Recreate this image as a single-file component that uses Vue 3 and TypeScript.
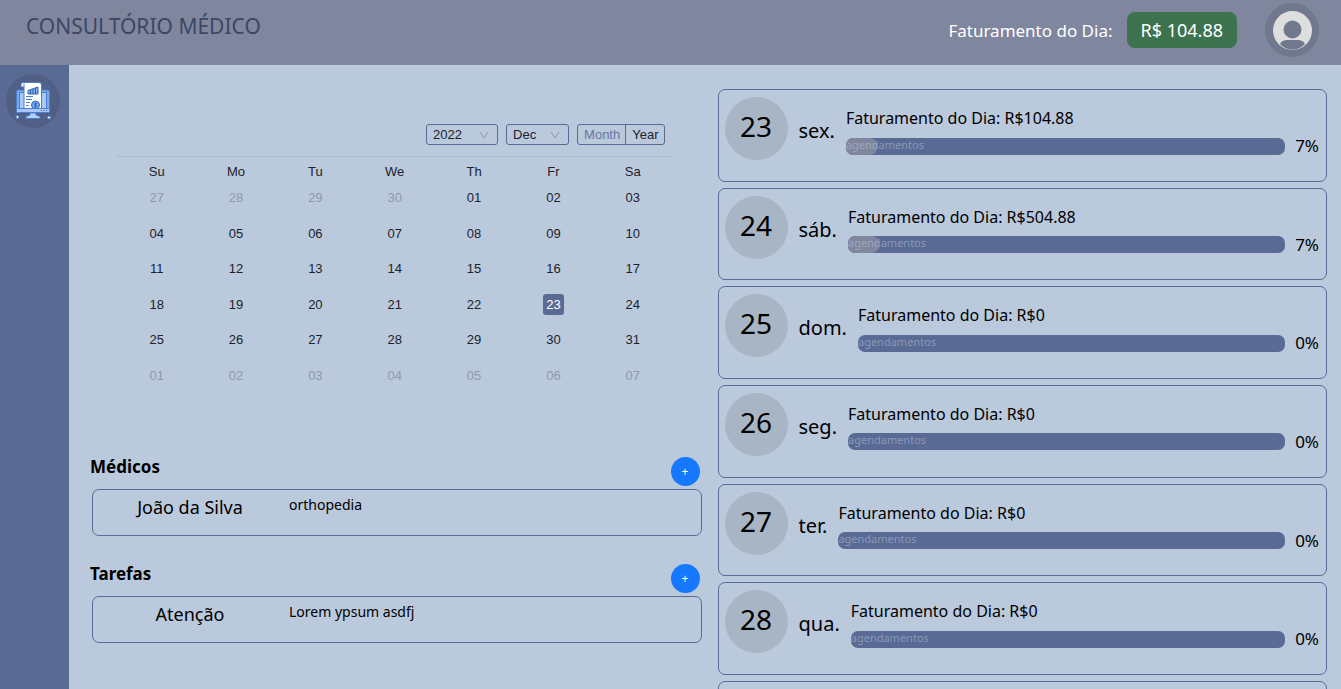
<script setup lang="ts">
import { computed, ref } from 'vue'

interface DaySummary {
  day: number
  weekday: string
  revenue: string
  percent: number
}

interface CalendarDay {
  label: string
  inMonth: boolean
}

interface ListItem {
  title: string
  detail: string
}

const year = ref('2022')
const month = ref('Dec')
const mode = ref('month')
const selectedDay = ref('23')

const weekdays: string[] = ['Su', 'Mo', 'Tu', 'We', 'Th', 'Fr', 'Sa']

const pad = (n: number): string => String(n).padStart(2, '0')

const weeks = computed<CalendarDay[][]>(() => {
  const start = new Date(2022, 10, 27)
  return Array.from({ length: 6 }, (_, w) =>
    Array.from({ length: 7 }, (_, d) => {
      const date = new Date(start.getFullYear(), start.getMonth(), start.getDate() + w * 7 + d)
      return { label: pad(date.getDate()), inMonth: date.getMonth() === 11 }
    }),
  )
})

const days: DaySummary[] = [
  { day: 23, weekday: 'sex.', revenue: '104.88', percent: 7 },
  { day: 24, weekday: 'sáb.', revenue: '504.88', percent: 7 },
  { day: 25, weekday: 'dom.', revenue: '0', percent: 0 },
  { day: 26, weekday: 'seg.', revenue: '0', percent: 0 },
  { day: 27, weekday: 'ter.', revenue: '0', percent: 0 },
  { day: 28, weekday: 'qua.', revenue: '0', percent: 0 },
  { day: 29, weekday: 'qui.', revenue: '0', percent: 0 },
]

const sections: { name: string; items: ListItem[] }[] = [
  { name: 'Médicos', items: [{ title: 'João da Silva', detail: 'orthopedia' }] },
  { name: 'Tarefas', items: [{ title: 'Atenção', detail: 'Lorem ypsum asdfj' }] },
]
</script>

<template>
  <div class="page">
    <header class="topbar">
      <h1 class="brand">CONSULTÓRIO MÉDICO</h1>
      <div class="account">
        <span class="account-label">Faturamento do Dia:</span>
        <span class="badge">R$ 104.88</span>
        <button class="round-button avatar" type="button" aria-label="Perfil">
          <svg viewBox="0 0 39 39" width="39" height="39" aria-hidden="true">
            <circle cx="19.5" cy="19.5" r="19.5" fill="#dedede" />
            <circle cx="19.5" cy="18.5" r="9" fill="#6f788c" />
            <path d="M7 33C8.500 30 11 29 14 29H25C28 29 30.500 30 32 33C25 40.500 14 40.500 7 33Z" fill="#6f788c" />
          </svg>
        </button>
      </div>
    </header>

    <div class="body">
      <nav class="sidebar">
        <button class="round-button report" type="button" aria-label="Relatórios">
          <svg viewBox="0 0 36 38" width="36" height="38" aria-hidden="true">
            <rect x="1" y="7.500" width="34" height="23.500" rx="2" fill="#4a80d4" />
            <rect x="2" y="8.500" width="32" height="21" rx="1" fill="#79a9ee" />
            <rect x="4" y="10" width="28" height="17" fill="#4a80d4" />
            <rect x="5" y="11" width="26" height="15" fill="#a9c8fa" />
            <path d="M8 .5H24Q26.500 .5 26.500 3V26.500H9V5H6V2.500Q6 .5 8 .5Z" fill="#fff" stroke="#4a80d4" />
            <path d="M9 1.500V5" stroke="#4a80d4" />
            <path d="M13 12V8.500L23 5V12Z" fill="#79a9ee" stroke="#3467b4" />
            <path d="M15.500 8V12M18 7V12M20.500 6V12" stroke="#3467b4" />
            <path d="M11 14.500H18M11 17.500H17M11 20.500H15M11 23.500H14" stroke="#4a80d4" />
            <circle cx="20.500" cy="23" r="4" fill="#79a9ee" stroke="#3467b4" />
            <path d="M22 21.500H20.500C19 21.500 19 23 20.500 23S22 25 20.500 25H19M20.500 20.500V26" fill="none" stroke="#3467b4" />
            <rect x="1.500" y="26.500" width="33" height="4" rx="1" fill="#a9c8fa" stroke="#4a80d4" />
            <path d="M26 28.500H27M28.500 28.500H29.500M31 28.500H32" stroke="#3467b4" />
            <path d="M15 31H21V33L25 34.500V36.500H11V34.500L15 33Z" fill="#b5d0fc" stroke="#4a80d4" />
            <circle cx="2.500" cy="35" r="1.500" fill="#fff" stroke="#4a80d4" />
            <circle cx="34" cy="35.500" r="1.500" fill="#fff" stroke="#4a80d4" />
            <path d="M29 4.500H30M32.500 5H34M1 5H2M6 34.500H7M28 35.500H29M30 34H31" stroke="#4a80d4" />
          </svg>
        </button>
      </nav>

      <main class="content">
        <div class="left">
          <section class="calendar" aria-label="Calendário">
            <div class="calendar-head">
              <div class="select-box year">
                <select v-model="year" aria-label="Ano">
                  <option>2022</option>
                  <option>2023</option>
                </select>
                <svg viewBox="0 0 10 8" width="10" height="8" aria-hidden="true">
                  <path d="M1 1L5 7L9 1" fill="none" stroke="#8b99aa" />
                </svg>
              </div>
              <div class="select-box month">
                <select v-model="month" aria-label="Mês">
                  <option>Nov</option>
                  <option>Dec</option>
                </select>
                <svg viewBox="0 0 10 8" width="10" height="8" aria-hidden="true">
                  <path d="M1 1L5 7L9 1" fill="none" stroke="#8b99aa" />
                </svg>
              </div>
              <div class="modes" role="radiogroup" aria-label="Modo">
                <label :class="{ checked: mode === 'month' }">
                  <input v-model="mode" type="radio" name="mode" value="month" />Month
                </label>
                <label :class="{ checked: mode === 'year' }">
                  <input v-model="mode" type="radio" name="mode" value="year" />Year
                </label>
              </div>
            </div>
            <table class="dates">
              <thead>
                <tr>
                  <th v-for="name in weekdays" :key="name" scope="col">{{ name }}</th>
                </tr>
              </thead>
              <tbody>
                <tr v-for="(week, w) in weeks" :key="w">
                  <td v-for="(date, d) in week" :key="d">
                    <button
                      type="button"
                      class="date"
                      :class="{ outside: !date.inMonth, selected: date.inMonth && date.label === selectedDay }"
                      @click="selectedDay = date.label"
                    >{{ date.label }}</button>
                  </td>
                </tr>
              </tbody>
            </table>
          </section>

          <section v-for="section in sections" :key="section.name" class="group">
            <div class="group-head">
              <h2>{{ section.name }}</h2>
              <button class="add" type="button" :aria-label="'Adicionar ' + section.name">+</button>
            </div>
            <ul class="items">
              <li v-for="item in section.items" :key="item.title" class="item">
                <span class="item-title">{{ item.title }}</span>
                <span class="item-detail">{{ item.detail }}</span>
              </li>
            </ul>
          </section>
        </div>

        <div class="agenda">
          <article v-for="entry in days" :key="entry.day" class="card">
            <div class="day-number">{{ entry.day }}</div>
            <div class="weekday">{{ entry.weekday }}</div>
            <div class="summary">
              <div class="revenue">Faturamento do Dia: R${{ entry.revenue }}</div>
              <div class="progress-row">
                <div
                  class="track"
                  role="progressbar"
                  aria-label="agendamentos"
                  :aria-valuenow="entry.percent"
                  aria-valuemin="0"
                  aria-valuemax="100"
                >
                  <div class="fill" :style="{ width: entry.percent + '%' }"></div>
                  <span class="track-label">agendamentos</span>
                </div>
                <span class="percent">{{ entry.percent }}%</span>
              </div>
            </div>
          </article>
        </div>
      </main>
    </div>
  </div>
</template>

<style>
html,
body,
#app {
  height: 100%;
}
body {
  margin: 0;
  background: #bac9dc;
}
</style>

<style scoped>
* {
  box-sizing: border-box;
}
.page {
  display: flex;
  flex-direction: column;
  height: 100vh;
  overflow: hidden;
  background: #bac9dc;
  color: #000;
  font-family: "Noto Sans", sans-serif;
  font-size: 16px;
}
button {
  border: 0;
  padding: 0;
  font-family: inherit;
  cursor: pointer;
}
.topbar {
  flex: none;
  display: flex;
  justify-content: space-between;
  height: 65px;
  padding: 0 22px 0 26px;
  background: #7f869e;
}
.brand {
  margin: 0;
  padding-top: 11px;
  font-size: 21px;
  line-height: 30px;
  font-weight: 400;
  color: #3c4766;
}
.account {
  display: flex;
  align-items: center;
  height: 60px;
  color: #fff;
}
.account-label {
  font-size: 17px;
}
.badge {
  margin-left: 14px;
  padding: 0 14px;
  border-radius: 8px;
  font-size: 18px;
  line-height: 36px;
  background: #3d724e;
}
.round-button {
  display: flex;
  align-items: center;
  justify-content: center;
  width: 54px;
  height: 54px;
  border-radius: 50%;
}
.avatar {
  margin-left: 28px;
  background: #6f788c;
}
.body {
  flex: 1;
  display: flex;
  min-height: 0;
}
.sidebar {
  flex: none;
  width: 69px;
  padding: 9px 6px;
  background: #596a94;
}
.report {
  background: #505f83;
}
.content {
  flex: 1;
  display: grid;
  grid-template-columns: repeat(2, minmax(0, 1fr));
  gap: 16px;
  min-height: 0;
  padding: 24px 14px 0 23px;
}
.calendar {
  padding: 35px 29px 0 25px;
  margin-bottom: 64px;
  font-family: "Liberation Sans", Arial, sans-serif;
  font-size: 13px;
  color: #1c232d;
}
.calendar-head {
  display: flex;
  justify-content: flex-end;
  gap: 8px;
  padding: 0 8px 11px 0;
  border-bottom: 1px solid #adbccd;
}
.select-box {
  position: relative;
  display: flex;
}
.select-box.year {
  width: 72px;
}
.select-box.month {
  width: 63px;
}
.select-box select {
  appearance: none;
  width: 100%;
  height: 21px;
  padding: 0 6px;
  border: 1px solid #596a94;
  border-radius: 3px;
  background: transparent;
  font: inherit;
  color: inherit;
}
.select-box svg {
  position: absolute;
  right: 9px;
  top: 7px;
  pointer-events: none;
}
.modes {
  display: flex;
  border: 1px solid #596a94;
  border-radius: 3px;
}
.modes label {
  padding: 0 5px 0 6px;
  line-height: 19px;
}
.modes label + label {
  border-left: 1px solid #596a94;
}
.modes .checked {
  color: #6778a2;
}
.modes input {
  position: absolute;
  opacity: 0;
  pointer-events: none;
}
.dates {
  width: 100%;
  height: 236px;
  border-collapse: collapse;
  table-layout: fixed;
}
.dates th {
  height: 23px;
  padding: 5px 0 0;
  font-weight: 400;
}
.dates td {
  padding: 0;
  text-align: center;
  vertical-align: middle;
}
.date {
  width: 21px;
  height: 21px;
  border-radius: 3px;
  background: transparent;
  font-size: 13px;
  line-height: 21px;
  color: inherit;
}
.date.outside {
  color: #8d9aab;
}
.date.selected {
  background: #596a94;
  color: #fff;
}
.group {
  margin-bottom: 28px;
}
.group-head {
  display: flex;
  justify-content: space-between;
  height: 32px;
  padding-right: 2px;
  margin-left: -2px;
}
.group-head h2 {
  margin: 0;
  font-size: 17px;
  line-height: 20px;
  font-weight: 700;
}
.add {
  width: 29px;
  height: 29px;
  border-radius: 50%;
  background: #1677ff;
  color: #fff;
  font-size: 12px;
  line-height: 26px;
}
.items {
  margin: 0;
  padding: 0;
  list-style: none;
}
.item {
  display: grid;
  grid-template-columns: 194px 1fr;
  height: 47px;
  border: 1px solid #596a94;
  border-radius: 7px;
}
.item-title {
  font-size: 18px;
  line-height: 34px;
  text-align: center;
}
.item-detail {
  padding-left: 2px;
  font-size: 14px;
  line-height: 30px;
}
.agenda {
  display: grid;
  grid-auto-rows: calc((100% - 44px) / 6);
  gap: 6px;
  min-height: 0;
  overflow-y: auto;
  scrollbar-width: none;
}
.card {
  display: flex;
  padding: 7px 7px 0 6px;
  border: 1px solid #596a94;
  border-radius: 7px;
}
.day-number {
  flex: none;
  width: 63px;
  height: 63px;
  border-radius: 50%;
  background: #a7b5c4;
  font-size: 28px;
  line-height: 58px;
  text-align: center;
}
.weekday {
  padding: 20px 11px 0;
  font-size: 20px;
  line-height: 28px;
}
.summary {
  flex: 1;
  min-width: 0;
  padding-top: 8px;
}
.revenue {
  line-height: 26px;
}
.progress-row {
  display: flex;
  align-items: center;
  gap: 10px;
  height: 30px;
}
.track {
  position: relative;
  flex: 1;
  height: 17px;
  border-radius: 7px;
  overflow: hidden;
  background: #596a94;
}
.fill {
  height: 100%;
  border-radius: 7px;
  background: #7f869e;
}
.track-label {
  position: absolute;
  left: 0;
  top: 0;
  font-size: 11px;
  line-height: 14px;
  color: rgba(186, 201, 220, 0.5);
}
.percent {
  font-size: 17px;
  line-height: 24px;
}
</style>
